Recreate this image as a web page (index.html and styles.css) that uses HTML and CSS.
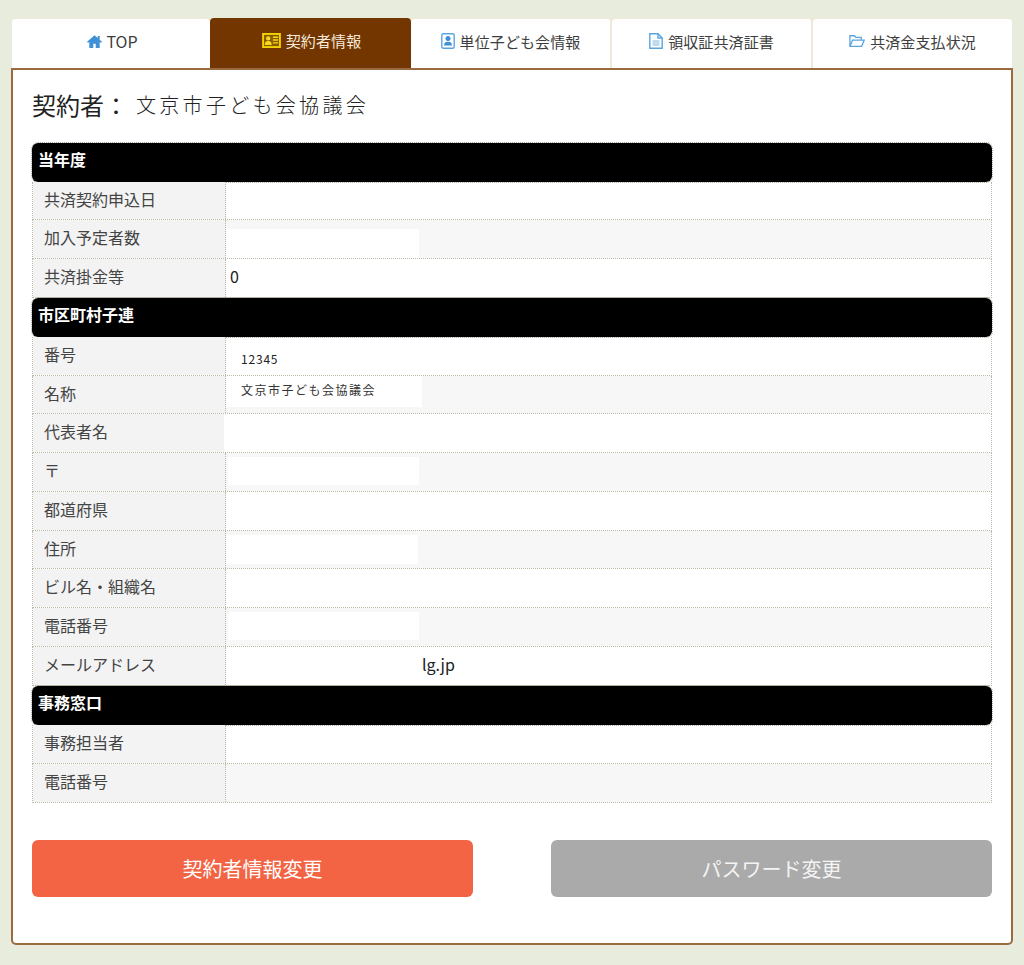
FILE: index.html
```html
<!DOCTYPE html>
<html lang="ja">
<head>
<meta charset="utf-8">
<title>契約者情報</title>
<link rel="stylesheet" href="styles.css">
</head>
<body>
<div class="page">
  <nav class="tabs">
    <a class="tab tab-first">
      <svg class="icon icon-home" viewBox="0 0 16 14"><path class="solid" d="M8 .3 0 7.200l1.100 1.300L2.400 7.400V14h4.300V9.500h2.600V14h4.300V7.400l1.300 1.100L16 7.200l-2.400-2.100V1.200h-2.200v2z"/></svg><span class="tab-top">TOP</span>
    </a>
    <a class="tab active">
      <svg class="icon icon-card" viewBox="0 0 20 16"><rect x="1" y="1" width="18" height="14" fill="#8a5a00" stroke="#f2d400" stroke-width="2"/><circle cx="6.500" cy="5.800" r="2.300" fill="#f7d820"/><path d="M2.800 12.800c0-3.400 1.500-4.300 3.700-4.300s3.700.9 3.700 4.300z" fill="#f7d820"/><path d="M11.500 4.500h5.500M11.500 7.500h5.500M11.500 10.500h5.500" stroke="#f7d820" stroke-width="1.500"/></svg>契約者情報
    </a>
    <a class="tab">
      <svg class="icon" viewBox="0 0 14 16"><rect class="line" x=".8" y=".8" width="12.400" height="14.400" rx="1.500"/><circle class="solid" cx="7" cy="5.600" r="2.500"/><path class="solid" d="M3 12.500c0-3 1.600-3.800 4-3.800s4 .8 4 3.800z"/></svg>単位子ども会情報
    </a>
    <a class="tab">
      <svg class="icon" viewBox="0 0 14 16"><path class="line" d="M.8.8h8.200l4.200 4.200v10.200H.8z"/><path class="line" d="M9 .8V5h4.200"/><path class="rule" d="M3.500 8h7M3.500 10h7M3.500 12h7"/></svg>領収証共済証書
    </a>
    <a class="tab">
      <svg class="icon icon-wide" viewBox="0 0 17 14"><path class="line" d="M1 12.800V1.400h4.800l1.500 1.800h5.700v2.800M1 12.800 3.800 6h12.400l-2.800 6.800z"/></svg>共済金支払状況
    </a>
  </nav>
  <main class="panel">
    <h1 class="title"><span class="title-label">契約者：</span><span class="title-value">文京市子ども会協議会</span></h1>
    <div class="sheet">
      <div class="section">当年度</div>
      <div class="row short"><div class="key">共済契約申込日</div><div class="val"></div></div>
      <div class="row alt"><div class="key">加入予定者数</div><div class="val"><span class="mask m-a"></span></div></div>
      <div class="row"><div class="key">共済掛金等</div><div class="val val-big">0</div></div>
      <div class="section">市区町村子連</div>
      <div class="row"><div class="key">番号</div><div class="val val-small">12345</div></div>
      <div class="row alt short"><div class="key">名称</div><div class="val"><span class="mask m-name">文京市子ども会協議会</span></div></div>
      <div class="row"><div class="key">代表者名</div><div class="val val-over"></div></div>
      <div class="row alt"><div class="key">〒</div><div class="val"><span class="mask m-b"></span></div></div>
      <div class="row"><div class="key">都道府県</div><div class="val"></div></div>
      <div class="row alt short"><div class="key">住所</div><div class="val"><span class="mask m-c"></span></div></div>
      <div class="row"><div class="key">ビル名・組織名</div><div class="val"></div></div>
      <div class="row alt"><div class="key">電話番号</div><div class="val"><span class="mask m-b"></span></div></div>
      <div class="row"><div class="key">メールアドレス</div><div class="val val-mail">lg.jp</div></div>
      <div class="section">事務窓口</div>
      <div class="row"><div class="key">事務担当者</div><div class="val"></div></div>
      <div class="row alt"><div class="key">電話番号</div><div class="val"></div></div>
    </div>
    <div class="actions">
      <a class="btn btn-primary">契約者情報変更</a>
      <a class="btn btn-muted">パスワード変更</a>
    </div>
  </main>
</div>
</body>
</html>
```
FILE: styles.css
```css
* { box-sizing: border-box; }
html, body { margin: 0; }
body {
  background: #e8ecdc;
  font-family: "Noto Sans CJK JP", "Noto Sans", sans-serif;
  color: #333;
}
.page { width: 1002px; margin-left: 11px; padding: 18px 0 20px; }
.tabs { display: flex; height: 50px; padding: 0 1px; }
.tab {
  flex: 1 1 0;
  display: flex;
  align-items: center;
  justify-content: center;
  gap: 5px;
  font-size: 15px;
  letter-spacing: .1px;
  line-height: 1;
  padding-bottom: 5px;
  color: #3d3d3d;
  background: #fff;
  border-right: 2px solid #f2e8d8;
  border-top: 1px solid #f2e8d8;
  border-radius: 4px 4px 0 0;
}
.tab:last-child { border-right: 0; }
.tab-first { flex: 0 0 198px; border-right: 0; padding-left: 3px; gap: 4px; }
.tab-top { font-size: 16px; letter-spacing: 0; }
.active {
  flex: 0 0 201px;
  background: #733600;
  border: 0;
  color: #f5e9d8;
  padding-left: 2px;
}
.icon { width: 14px; height: 16px; flex: none; }
.icon-home { width: 15px; height: 13px; }
.icon-card { width: 19px; height: 15px; }
.icon-wide { width: 16px; height: 14px; }
.solid { fill: #3f90d4; }
.line { fill: none; stroke: #5aa5e0; stroke-width: 1.400; }
.rule { fill: none; stroke: #7fb8e6; stroke-width: 1; }
.panel {
  height: 877px;
  background: #fff;
  border: 2px solid #9a6b3f;
  border-radius: 0 0 5px 5px;
  padding: 0 19px;
}
.title {
  margin: 0;
  height: 73px;
  padding-bottom: 4px;
  display: flex;
  align-items: center;
  font-weight: 400;
  color: #222;
}
.title-label { font-size: 24px; width: 104px; line-height: 1; }
.title-value { font-size: 20px; letter-spacing: 3.300px; color: #222; font-weight: 300; line-height: 1; }
.sheet { display: flex; flex-direction: column; }
.section, .row { height: 39px; }
.row.short { height: 38px; }
.section {
  background: #000;
  color: #fff;
  font-size: 16px;
  font-weight: 700;
  line-height: 33px;
  padding-left: 6px;
  border-radius: 6px;
  outline: 1px dotted #a8a498;
}
.row {
  display: grid;
  grid-template-columns: 193px 1fr;
  grid-template-rows: 100%;
  border-bottom: 1px dotted #bdb8a8;
  border-left: 1px dotted #bdb8a8;
  border-right: 1px dotted #bdb8a8;
}
.alt .val { background: #f7f7f7; }
.key {
  background: #f3f3f3;
  border-right: 1px dotted #bdb8a8;
  font-size: 16px;
  line-height: 34px;
  padding-left: 11px;
  color: #444;
}
.val { font-size: 16px; color: #222; }
.val-big { line-height: 34px; padding-left: 4px; }
.val-small { font-size: 12px; letter-spacing: .8px; line-height: 32px; padding: 6px 0 0 15px; }
.val-mail { line-height: 35px; padding-left: 196px; }
.val-over { background: #fff; margin-left: -2px; position: relative; }
.mask { display: block; background: #fff; }
.m-a { width: 193px; height: 29px; margin-top: 9px; }
.m-b { width: 191px; height: 28px; margin: 4px 0 0 2px; }
.m-c { width: 192px; height: 29px; margin-top: 4px; }
.m-name {
  width: 196px;
  height: 31px;
  font-size: 12px;
  letter-spacing: 1.500px;
  line-height: 28px;
  padding-left: 15px;
  color: #333;
}
.actions { display: flex; justify-content: space-between; margin-top: 37px; }
.btn {
  width: 441px;
  height: 57px;
  border-radius: 6px;
  display: flex;
  align-items: center;
  justify-content: center;
  font-size: 20px;
  color: #fff;
}
.btn-primary { background: #f26444; }
.btn-muted { background: #aaa; color: #f4f4f4; }
```
